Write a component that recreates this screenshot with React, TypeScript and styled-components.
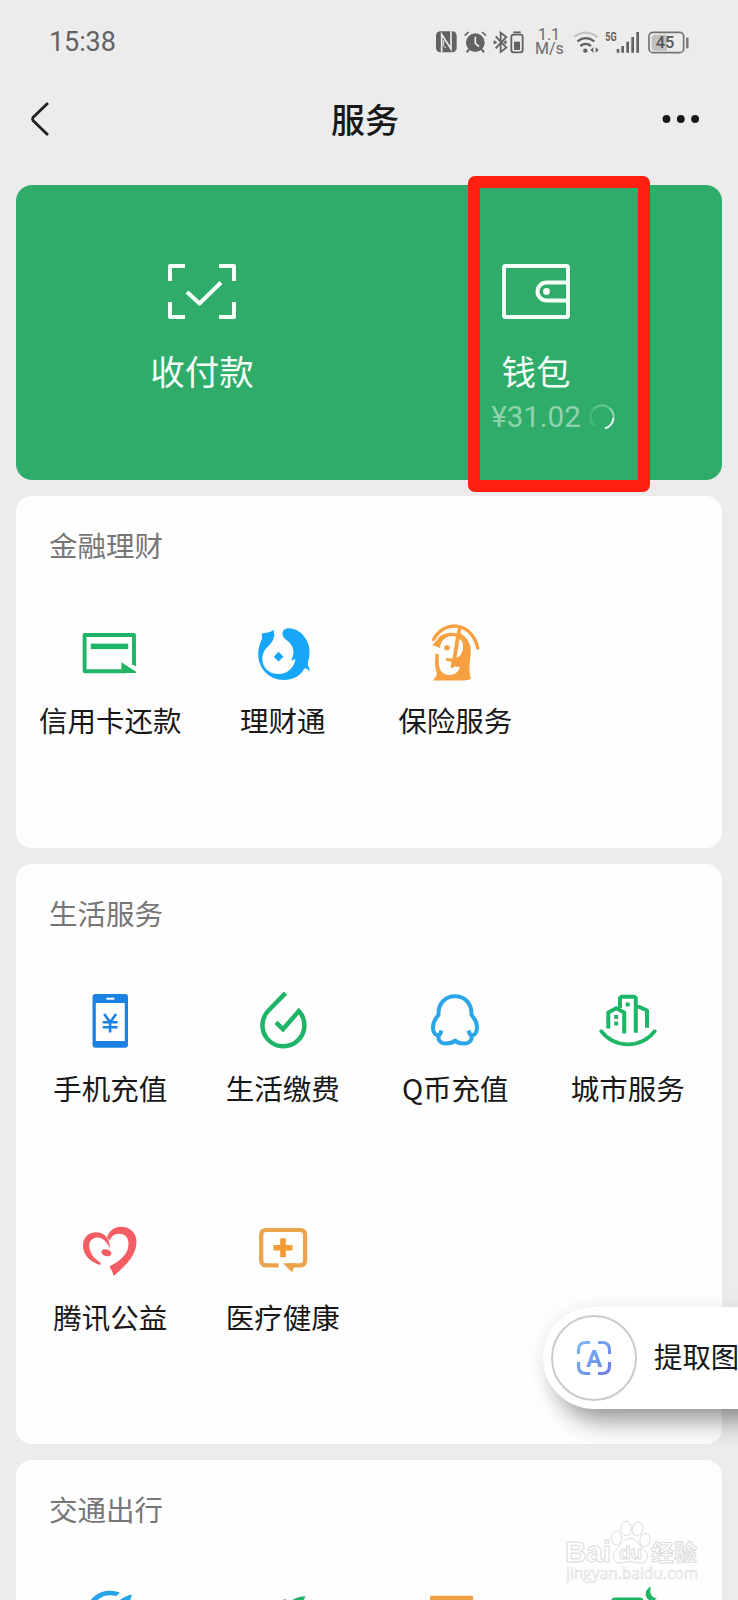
import React from 'react';
import styled, { createGlobalStyle } from 'styled-components';

const GlobalStyle = createGlobalStyle`
  * { box-sizing: border-box; }
  html, body { margin: 0; padding: 0; background: #ececec; }
  body { font-family: Roboto, "Noto Sans CJK SC", sans-serif; color: #181818; }
  svg { display: block; flex: none; }
`;

const Screen = styled.div`
  position: relative;
  width: 738px;
  height: 1600px;
  overflow: hidden;
  background: #ececec;
  display: flex;
  flex-direction: column;
`;

const StatusBar = styled.header`
  display: flex;
  align-items: center;
  flex: none;
  height: 84px;
  padding: 0 49px;
  color: #626262;
`;

const Clock = styled.span`
  font-size: 27px;
  line-height: 32px;
  letter-spacing: -0.1px;
`;

const StatusIcons = styled.div`
  display: flex;
  align-items: center;
  margin-left: auto;
`;

const Slot = styled.div<{ $gap: number }>`
  margin-left: ${(p) => p.$gap}px;
`;

const Speed = styled.div`
  width: 28px;
  text-align: center;
  font-size: 16px;
  line-height: 14px;
  color: #6b6b6b;
`;

const NavBar = styled.nav`
  display: grid;
  grid-template-columns: 80px 1fr 80px;
  align-items: center;
  flex: none;
  height: 70px;
  padding: 0 38px 0 30px;
  margin-bottom: 31px;
`;

const PageTitle = styled.h1`
  margin: 0;
  padding-bottom: 1px;
  font: 500 34px/46px "Noto Sans CJK SC", sans-serif;
  text-align: center;
`;

const MoreSlot = styled.div`
  justify-self: end;
`;

const PayPanel = styled.section`
  display: grid;
  grid-template-columns: 1fr 1fr;
  flex: none;
  height: 295px;
  margin: 0 16px 16px;
  padding: 79px 19px 0;
  border-radius: 16px;
  background: #2fac69;
  color: #f4fff8;
`;

const PayItem = styled.div`
  display: flex;
  flex-direction: column;
  align-items: center;
`;

const PayLabel = styled.div`
  margin-top: 28px;
  font: 400 34.5px/46px "Noto Sans CJK SC", sans-serif;
`;

const Balance = styled.div`
  display: flex;
  align-items: center;
  gap: 8px;
  margin: 2px 0 0 34px;
  font: 400 29.5px/44px Roboto, sans-serif;
  color: #8fd3ae;
`;

const Card = styled.section<{ $height: number }>`
  flex: none;
  height: ${(p) => p.$height}px;
  margin: 0 16px 16px;
  padding: 29px 8px 0;
  border-radius: 16px;
  background: #fefefe;
`;

const CardTitle = styled.h2`
  margin: 0 0 58px 25px;
  font: 400 28.5px/40px "Noto Sans CJK SC", sans-serif;
  color: #767676;
`;

const Grid = styled.div`
  display: grid;
  grid-template-columns: repeat(4, 1fr);
  grid-auto-rows: 229px;
`;

const Service = styled.div`
  display: flex;
  flex-direction: column;
  align-items: center;
  gap: 17px;
`;

const ServiceLabel = styled.span`
  font: 400 28.5px/40px "Noto Sans CJK SC", sans-serif;
  white-space: nowrap;
`;

const Highlight = styled.div`
  position: absolute;
  left: 468px;
  top: 176px;
  width: 182px;
  height: 316px;
  border: 12px solid #ff2012;
  border-radius: 7px;
`;

const ExtractPill = styled.div`
  position: absolute;
  left: 543px;
  top: 1307px;
  width: 250px;
  height: 102px;
  display: flex;
  align-items: center;
  padding-left: 8px;
  border-radius: 51px;
  background: #fff;
  box-shadow: 8px 20px 26px -8px rgba(0, 0, 0, 0.4), 0 0 20px rgba(0, 0, 0, 0.08);
`;

const ExtractBadge = styled.div`
  display: flex;
  align-items: center;
  justify-content: center;
  flex: none;
  width: 86px;
  height: 86px;
  border: 2px solid #cbcbcb;
  border-radius: 50%;
`;

const ExtractText = styled.span`
  margin: 0 0 4px 17px;
  font: 400 28.4px/40px "Noto Sans CJK SC", sans-serif;
  white-space: nowrap;
`;

const Watermark = styled.div`
  position: absolute;
  left: 566px;
  top: 1519px;
  width: 134px;
`;

const Glyph = ({ children }: { children: React.ReactNode }) => (
  <svg width="60" height="60" viewBox="0 0 60 60" fill="none">{children}</svg>
);

const GREEN = '#1fb566';
const BLUE = '#18a7f8';
const ORANGE = '#f6a040';

const CreditCardIcon = () => (
  <Glyph>
    <path d="M54 42V12H4.600V48.200H46" stroke={GREEN} strokeWidth="3.900" strokeLinejoin="round" />
    <path d="M52.200 39 56 41.500V43.500L52.200 41Z" fill={GREEN} />
    <rect x="10.800" y="20.600" width="37.400" height="5.500" fill={GREEN} />
    <path d="M41.400 39.300 56 48.800V50H41.400Z" fill={GREEN} />
  </Glyph>
);

const FishIcon = () => (
  <Glyph>
    <path d="M20.900 6.500C17 10 13 9.500 8.800 10.500C8.800 14 9.500 15 8.500 17C-1 37 11 57 31 57C41 57 48 52 51.500 45.500C54 45 55 47 56.600 48.500C56.800 44.500 54.500 43 54.800 40C57.500 31 57 23 53.500 17C48 7.500 40 4.500 33.500 5.500C28.500 7 28.500 12 31.500 15.500C36 18.500 40 22 40.500 29C40.600 32 39 35 38.300 37.800C40 37 41 36.500 42.500 36.200C41 45 34 51 25.600 51C15 51 8 43 9.500 33C11 24 20 22 21.200 13C21.500 10.500 20.500 9 20.900 6.500Z" fill={BLUE} />
    <path d="m25.600 28.800 4.900 4.900-4.900 4.900-4.900-4.900Z" fill={BLUE} />
  </Glyph>
);

const InsuranceIcon = () => (
  <Glyph>
    <path d="M8.500 16.500C20-4 47-1 52.800 25" stroke={ORANGE} strokeWidth="3.400" strokeLinecap="round" />
    <path fillRule="evenodd" d="M6.800 22C11 20.500 12 14 18 11.500C23 9.500 28 9.500 31.500 10.500L34 2.500L36.500 4L35.500 10.500C42 14 46 21 45.800 28C45.600 38 43 45 45.800 55.500C44 57.500 38 57.500 33 57.500H8C9.500 55 12 53 12 50C9.500 44 10 38 10.500 30.500L14 31.500C13.500 37 13 43 16 48C20 54 32 54 35 44L29 43.500L28 45H25.500L26.500 39L21 37.500V35L27.500 35.500L31 13.500C24 11.500 16 15 15 25L10 23ZM34.500 16L31.500 34.500C38 34 41 20 34.500 16Z" fill={ORANGE} />
    <circle cx="22" cy="24.700" r="2.700" fill={ORANGE} />
  </Glyph>
);

const PhoneIcon = () => (
  <Glyph>
    <path fillRule="evenodd" d="M15.500 3h29.500q3 0 3 3v47.700q0 3-3 3H15.500q-3 0-3-3V6q0-3 3-3ZM15.800 12v38h29V12Z" fill="#1b82e4" />
    <path d="M26.400 7.700h8" stroke="#fff" strokeWidth="2" />
    <path d="m24.200 23 5.900 8.300 6-8.300M30.100 31v10.500M22.800 31.200h14.800M22.800 36.200h14.800" stroke="#1b82e4" strokeWidth="2.600" />
  </Glyph>
);

const DropIcon = () => (
  <Glyph>
    <path d="M32.500 2.200 15.500 19.500A21 21 0 1 0 45.800 20L30 38.200l-7-6.900" stroke={GREEN} strokeWidth="4.500" />
  </Glyph>
);

const PenguinIcon = () => (
  <Glyph>
    <path d="M16.500 39.500 15.200 43C12 45.500 8 43.500 8 36C8 31 10.500 27.500 13.500 24C13 12.500 20 5.300 30 5.300C40 5.300 47 12.500 46.500 24C49.500 27.500 52 31 52 36C52 43.500 48 45.500 44.800 43L43.500 39.500M15 43C11.500 47 14 52.500 21.500 52.500C25.500 52.500 28 51.500 30 49.500C32 51.500 34.500 52.500 38.500 52.500C46 52.500 48.500 47 45 43" stroke="#2aa5e8" strokeWidth="4" strokeLinejoin="round" />
  </Glyph>
);

const CityIcon = () => (
  <Glyph>
    <path d="M3.200 40.200C17 57.800 43 57.800 56.800 40.200" stroke={GREEN} strokeWidth="3.800" strokeLinecap="round" />
    <path d="M10.300 37.500V21.500L18.300 17.200 26.200 21.500V42.500M22 17V7L23.500 5.700H36.300L37.800 7V41.800M38 14.500 49 19.500V36.700" stroke={GREEN} strokeWidth="4" strokeLinejoin="round" />
    <path d="M16.200 24h4v4h-4zM16.200 30.500h4v4h-4zM27.700 11.500h4v4h-4z" fill={GREEN} />
  </Glyph>
);

const HeartIcon = () => (
  <Glyph>
    <path d="M20.300 45C10 42 3 35 3 25.500C3 17 9 12 16.500 12.200C25 12.500 30 19 30 28.500C26.500 21 22 17 16.800 17.500C12 18 8.800 21.500 9.300 26.500C10 34 14 38.500 20.500 42.500Z" fill="#f45d63" />
    <path d="M27 17.500C29 11 34 6.800 41 6.800C50 6.800 56.500 13 56.500 22C56.500 36 44 47 33.800 56C32.500 52 31 49 29.500 46.500C39 41 49 35 48.500 22.500C48 15 41 12 35 14.500C32.500 15.500 31 17.500 29.800 20.500Z" fill="#f45d63" />
    <ellipse cx="26.400" cy="32.700" rx="5" ry="3.400" transform="rotate(14 26.400 32.700)" fill="#f45d63" />
  </Glyph>
);

const MedicalIcon = () => (
  <Glyph>
    <path d="M25.500 45.400H13.200q-5-.1-5-5.100V15q0-5 5-5h33.900q5 0 5 5v25.300q0 5-5 5.100H36" stroke="#eba44b" strokeWidth="4.200" />
    <path d="M30 43.300H43L39 52.300Z" fill="#eba44b" />
    <path d="M30 18.200v19M20.500 27.700h19" stroke="#f39b36" strokeWidth="5.600" />
  </Glyph>
);

const TransitIcon = () => (
  <Glyph>
    <path d="M9 15C18 3 29 2 39.800 5.500L36.500 9C28 7 21 8 14 17Z" fill="#23a3ea" />
    <path d="M52 7.500C46 8.500 40 12 36 17H49Z" fill="#23a3ea" />
  </Glyph>
);

const LeafIcon = () => (
  <Glyph>
    <path d="M52.300 9.300C46 9.500 40 11.500 35 16H47Q51.500 13 52.300 9.300Z" fill={GREEN} />
    <path d="M28 14q3-3 7-.5l-3 3Z" fill="#6aa884" />
  </Glyph>
);

const TicketIcon = () => (
  <Glyph>
    <path d="M6 8.700h41q1 0 1 1V40H5V9.700q0-1 1-1Z" fill="#ee9f43" />
  </Glyph>
);

const HotelIcon = () => (
  <Glyph>
    <rect x="13" y="10.600" width="32.600" height="40" rx="4" fill={GREEN} />
    <path d="M53 -.5C46.500 2.500 46 9.500 51 13C54 14 57 13.500 59 11.500C53 10.500 51 5.500 53 -.5Z" fill={GREEN} />
  </Glyph>
);

const NfcIcon = () => (
  <svg width="21" height="22" viewBox="50 47 63 66">
    <rect x="50" y="48" width="62" height="63" rx="13" fill="#626262" />
    <path d="M67 111V57L95 101V48" fill="none" stroke="#ececec" strokeWidth="5" />
    <path d="M73 74V92L80 98" fill="none" stroke="#ececec" strokeWidth="3" />
  </svg>
);

const AlarmIcon = () => (
  <svg width="23" height="22" viewBox="135 47 69 66" fill="none" stroke="#626262">
    <circle cx="169" cy="82" r="28" fill="#626262" stroke="none" />
    <path d="M137 61 149 50M201 61 189 50" strokeWidth="5" />
    <path d="m150 102-7 9M188 102l7 9" strokeWidth="6" />
    <path d="M169 64v20l11 10" stroke="#ececec" strokeWidth="5" />
  </svg>
);

const BluetoothIcon = () => (
  <svg width="31" height="23" viewBox="223 46 93 69" fill="none" stroke="#626262" strokeWidth="5.500">
    <path d="m231 62 32 34-17 13V51l17 13-32 34M225 76l6 4-6 4M263 76l-5 4 5 4" />
    <rect x="278" y="57" width="34" height="53" rx="7" />
    <path d="M284 50h22" />
    <path d="M286 78h18v25h-18z" fill="#626262" stroke="none" />
  </svg>
);

const WifiIcon = () => (
  <svg width="27" height="23" viewBox="461 46 81 69" fill="none" strokeWidth="7">
    <path d="M465 64Q499 38 534 64" stroke="#c4c4c4" />
    <path d="M474 77Q499 58 525 77" stroke="#626262" />
    <path d="M483 91Q499 78 515 91" stroke="#626262" />
    <circle cx="498" cy="105" r="6.500" fill="#626262" />
    <path d="m522 95-9 8 9 8zM529 95l9 8-9 8z" fill="#626262" />
  </svg>
);

const SignalIcon = () => (
  <svg width="35" height="23" viewBox="556 46 105 69">
    <text x="557" y="76" fontSize="37" fontWeight="700" textLength="34" lengthAdjust="spacingAndGlyphs" fill="#626262" fontFamily="Roboto, sans-serif">5G</text>
    <path d="M595 100v11M609 91v20M624 78v33M639 64v47M654 49v62" stroke="#626262" strokeWidth="8" fill="none" />
  </svg>
);

const BatteryIcon = () => (
  <svg width="41" height="23" viewBox="683 46 123 69">
    <rect x="686" y="50" width="104" height="61" rx="12" fill="none" stroke="#747474" strokeWidth="5" />
    <path d="M704 57h36v48h-36q-10 0-10-9V66q0-9 10-9Z" fill="#c0c0c0" />
    <path d="M801 66v32" stroke="#747474" strokeWidth="7" />
    <text x="734" y="98" fontSize="49" fontWeight="500" textAnchor="middle" fill="#555" fontFamily="Roboto, sans-serif">45</text>
  </svg>
);

const BackIcon = () => (
  <svg width="20" height="36" viewBox="0 0 20 36" fill="none">
    <path d="M18 2 3 16.500q-1 1.500 0 3L18 34" stroke="#222" strokeWidth="2.800" />
  </svg>
);

const MoreIcon = () => (
  <svg width="38" height="10" viewBox="0 0 38 10" fill="#181818">
    <circle cx="4.500" cy="5" r="3.900" />
    <circle cx="18.800" cy="5" r="3.900" />
    <circle cx="33.100" cy="5" r="3.900" />
  </svg>
);

const ScanIcon = () => (
  <svg width="70" height="55" viewBox="0 0 70 55" fill="none" stroke="#f4fff8" strokeWidth="4" strokeLinejoin="round">
    <path d="M18 2H3v15M52 2h15v15M18 53H3V38M52 53h15V38" />
    <path d="m20 28 12.500 11.500L54 18.500" />
  </svg>
);

const WalletIcon = () => (
  <svg width="68" height="55" viewBox="0 0 68 55" fill="none" stroke="#f4fff8" strokeWidth="4">
    <rect x="2" y="2" width="64" height="51" rx="1.500" />
    <path d="M66 18.500H44.500a9 9 0 0 0 0 18H66" />
    <circle cx="44.500" cy="27.500" r="3.400" fill="#f4fff8" stroke="none" />
  </svg>
);

const Spinner = () => (
  <svg width="26" height="26" viewBox="0 0 26 26" fill="none" strokeWidth="1.800">
    <path d="M6.500 22.500A11.600 11.600 0 0 1 5 4.500" stroke="#4bb97e" />
    <path d="M5 4.500A11.600 11.600 0 0 1 21 4.500" stroke="#6dc796" />
    <path d="M21 4.500A11.600 11.600 0 0 1 24.500 14" stroke="#9bdab8" />
    <path d="M24.500 14A11.600 11.600 0 0 1 16 24.200" stroke="#e6f9ee" strokeWidth="2.200" />
  </svg>
);

const ExtractIcon = () => (
  <svg width="36" height="36" viewBox="0 0 36 36" fill="none">
    <defs>
      <linearGradient id="extract" x1="0" y1="0" x2="36" y2="36" gradientUnits="userSpaceOnUse">
        <stop stopColor="#83bdf2" />
        <stop offset="0.500" stopColor="#6f9df0" />
        <stop offset="1" stopColor="#7377d8" />
      </linearGradient>
    </defs>
    <path d="M2.500 14V10q0-7.500 7.500-7.500h4M22 2.500h4q7.500 0 7.500 7.500v4M2.500 22v4q0 7.500 7.500 7.500h4M22 33.500h4q7.500 0 7.500-7.500v-4" stroke="url(#extract)" strokeWidth="3.200" />
    <text x="18" y="26.500" fontSize="24" fontWeight="700" textAnchor="middle" fill="url(#extract)" fontFamily="Roboto, sans-serif">A</text>
  </svg>
);

const WatermarkArt = () => (
  <svg width="134" height="66" viewBox="0 0 134 66" fill="#fff" stroke="#dcdcdc" strokeWidth="1">
    <g fontFamily="'Liberation Sans', 'Noto Sans CJK SC', sans-serif" fontWeight="700">
      <text x="-1" y="43" fontSize="30" textLength="46" lengthAdjust="spacingAndGlyphs">Bai</text>
      <text x="85" y="41.500" fontSize="23" textLength="46" fontFamily="'Noto Sans CJK SC', sans-serif">经验</text>
      <text x="0" y="60" fontSize="15.500" strokeWidth="0.600" fontWeight="400" textLength="132" fontFamily="'Open Sans', sans-serif">jingyan.baidu.com</text>
    </g>
    <ellipse cx="50.500" cy="19" rx="5" ry="7" />
    <ellipse cx="60" cy="9.500" rx="5.200" ry="7.300" />
    <ellipse cx="71.500" cy="10" rx="5.200" ry="7" transform="rotate(12 71.500 10)" />
    <ellipse cx="79" cy="21" rx="5" ry="6.700" transform="rotate(18 79 21)" />
    <path d="M64 19.500C72 19.500 74 28 79 32C84 37 81 44 74 44C70 44 68 42.500 64 42.500C60 42.500 58 44 54 44C47 44 45 37 50 31C54 27 57 19.500 64 19.500Z" />
    <text x="64.500" y="40" fontSize="19" textAnchor="middle" fontFamily="'Liberation Sans', sans-serif" fontWeight="700">du</text>
  </svg>
);

type Entry = { label?: string; Icon: () => React.ReactElement };

const sections: { title: string; height: number; items: Entry[] }[] = [
  {
    title: '金融理财',
    height: 352,
    items: [
      { label: '信用卡还款', Icon: CreditCardIcon },
      { label: '理财通', Icon: FishIcon },
      { label: '保险服务', Icon: InsuranceIcon },
    ],
  },
  {
    title: '生活服务',
    height: 580,
    items: [
      { label: '手机充值', Icon: PhoneIcon },
      { label: '生活缴费', Icon: DropIcon },
      { label: 'Q币充值', Icon: PenguinIcon },
      { label: '城市服务', Icon: CityIcon },
      { label: '腾讯公益', Icon: HeartIcon },
      { label: '医疗健康', Icon: MedicalIcon },
    ],
  },
  {
    title: '交通出行',
    height: 352,
    items: [{ Icon: TransitIcon }, { Icon: LeafIcon }, { Icon: TicketIcon }, { Icon: HotelIcon }],
  },
];

export default function App() {
  return (
    <>
      <GlobalStyle />
      <Screen>
        <StatusBar>
          <Clock>15:38</Clock>
          <StatusIcons>
            <NfcIcon />
            <Slot $gap={7}><AlarmIcon /></Slot>
            <Slot $gap={6}><BluetoothIcon /></Slot>
            <Slot $gap={11}><Speed>1.1<br />M/s</Speed></Slot>
            <Slot $gap={10}><WifiIcon /></Slot>
            <Slot $gap={5}><SignalIcon /></Slot>
            <Slot $gap={8}><BatteryIcon /></Slot>
          </StatusIcons>
        </StatusBar>
        <NavBar>
          <BackIcon />
          <PageTitle>服务</PageTitle>
          <MoreSlot><MoreIcon /></MoreSlot>
        </NavBar>
        <PayPanel>
          <PayItem>
            <ScanIcon />
            <PayLabel>收付款</PayLabel>
          </PayItem>
          <PayItem>
            <WalletIcon />
            <PayLabel>钱包</PayLabel>
            <Balance>¥31.02<Spinner /></Balance>
          </PayItem>
        </PayPanel>
        {sections.map(({ title, height, items }) => (
          <Card key={title} $height={height}>
            <CardTitle>{title}</CardTitle>
            <Grid>
              {items.map(({ label, Icon }, i) => (
                <Service key={i}>
                  <Icon />
                  {label && <ServiceLabel>{label}</ServiceLabel>}
                </Service>
              ))}
            </Grid>
          </Card>
        ))}
        <Highlight />
        <ExtractPill>
          <ExtractBadge><ExtractIcon /></ExtractBadge>
          <ExtractText>提取图</ExtractText>
        </ExtractPill>
        <Watermark><WatermarkArt /></Watermark>
      </Screen>
    </>
  );
}
